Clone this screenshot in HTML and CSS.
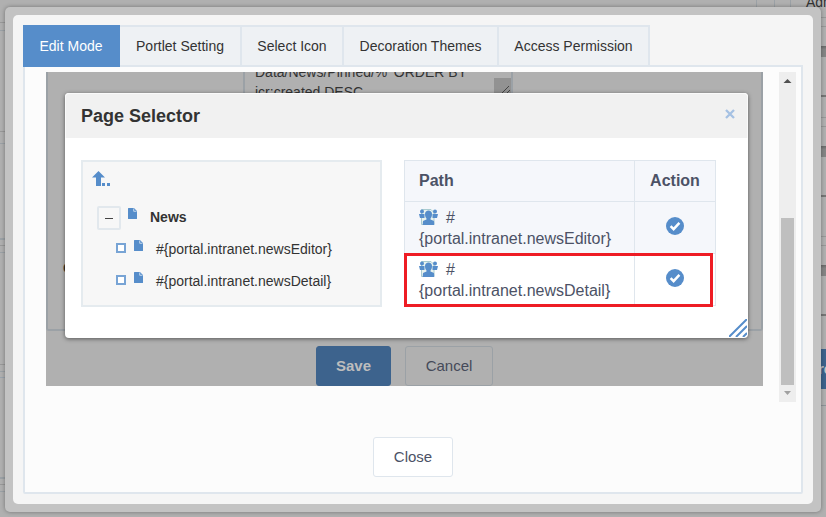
FILE: index.html
```html
<!DOCTYPE html>
<html lang="en">
<head>
<meta charset="utf-8">
<title>Page Selector</title>
<link rel="stylesheet" href="styles.css">
</head>
<body>
<svg class="sprite" aria-hidden="true">
  <symbol id="file" viewBox="0 0 9 11"><path fill="#568dca" d="M.6 0H6l3 3v7.400a.6.6 0 0 1-.6.6H.6a.6.6 0 0 1-.6-.6V.6A.6.6 0 0 1 .6 0z"/><path d="M5.700.5v2.800h2.800" fill="none" stroke="#dce8f5" stroke-width=".8"/></symbol>
  <symbol id="check" viewBox="0 0 18 18"><circle cx="9" cy="9" r="9" fill="#568dca"/><path d="M4.6 9.1l3 3 5.8-6.3" fill="none" stroke="#fff" stroke-width="2.5"/></symbol>
  <symbol id="people" viewBox="0 0 19 16"><path d="M2.500.5H12l3 3v12H2.500z" fill="#e9f3ef" stroke="#a9cbd0"/><g fill="#568dca"><circle cx="3" cy="2.500" r="2"/><path d="M0 5h5.500v4H1z"/><circle cx="16" cy="2.500" r="2"/><path d="M13.500 5H19l-1 4h-4.500z"/><path d="M6 5C6 2.800 7.500 1.500 9.500 1.500S13 2.800 13 5c0 2-.6 3.700-1.500 4.500v1l3 1.200c.6.300.7 1 .7 4.300H3.800c0-3.300.1-4 .7-4.300l3-1.200v-1C6.600 8.700 6 7 6 5z"/></g></symbol>
</svg>
<div class="page">
  <div class="rail">
    <i class="gap first"></i><i class="card c1"></i><i class="gap"></i><i class="card c2"></i><i class="gap g3"></i><i class="card c3"></i><i class="gap g3"></i><i class="card c4"></i><i class="gap g5"></i>
  </div>
  <div class="topline"><i></i><i></i><i></i><span>Adm</span></div>
  <div class="rail right">
    <i class="cell start"></i><b></b><i class="cell"></i><i class="cell low"></i><b></b><i class="cell"></i><i class="cell low tall"></i><b></b><i class="cell"></i><span class="action">re</span><i class="end"></i>
  </div>
</div>

<div class="frame">
  <div class="window">
    <nav class="tabs">
      <a class="tab active">Edit Mode</a><a class="tab t2">Portlet Setting</a><a class="tab t3">Select Icon</a><a class="tab t4">Decoration Themes</a><a class="tab t5">Access Permission</a>
    </nav>
    <section class="panel">
      <div class="content">
        <div class="editor">
          <div class="fieldset">
            <div class="textarea"><div class="query">Data/News/Pinned/%' ORDER BY<br>jcr:created DESC</div><div class="corner"><svg width="17" height="22"><path d="M8 15l7-7M13 15l3-3" stroke="#444" fill="none"/></svg></div></div>
            <strong class="label">Content</strong>
          </div>
          <div class="buttons"><button class="btn save">Save</button><button class="btn cancel">Cancel</button></div>
        </div>
        <div class="scrollbar">
          <svg width="17" height="17"><path d="M4.500 11h8L8.500 7z" fill="#505050"/></svg>
          <i></i>
          <svg width="17" height="17"><path d="M5 6h7L8.500 10z" fill="#a0a0a0"/></svg>
        </div>
      </div>
      <div class="footer"><button class="btn close">Close</button></div>
    </section>
  </div>
</div>

<div class="dialog">
  <header><h1>Page Selector</h1><svg width="10" height="10"><path d="M1 1l8 8M9 1L1 9" stroke="#a5c1e3" stroke-width="2.300"/></svg></header>
  <div class="body">
    <div class="tree">
      <svg class="up" width="20" height="16"><path d="M6.500 0L13 6.500H9V15H4V6.500H0z" fill="#568dca"/><path d="M10 12h3v3h-3zM15 12h3v3h-3z" fill="#568dca"/></svg>
      <div class="node root"><span class="toggle"></span><svg class="file" width="9" height="11"><use href="#file"/></svg><strong>News</strong></div>
      <div class="node"><span class="box"></span><svg class="file" width="9" height="11"><use href="#file"/></svg><span>#{portal.intranet.newsEditor}</span></div>
      <div class="node"><span class="box"></span><svg class="file" width="9" height="11"><use href="#file"/></svg><span>#{portal.intranet.newsDetail}</span></div>
    </div>
    <div class="tablewrap">
      <table>
        <tr><th>Path</th><th class="action-col">Action</th></tr>
        <tr class="odd"><td><svg class="people" width="19" height="16"><use href="#people"/></svg>#<br>{portal.intranet.newsEditor}</td><td class="action-col"><svg width="18" height="18"><use href="#check"/></svg></td></tr>
        <tr><td><svg class="people" width="19" height="16"><use href="#people"/></svg>#<br>{portal.intranet.newsDetail}</td><td class="action-col"><svg width="18" height="18"><use href="#check"/></svg></td></tr>
      </table>
      <div class="highlight"></div>
    </div>
  </div>
  <svg class="grip" width="18" height="18"><path d="M0 18L18 0M7 18L18 7M14 18l4-4" stroke="#568dca" stroke-width="2"/></svg>
</div>
</body>
</html>
```
FILE: styles.css
```css
* { box-sizing: border-box; }
body { margin: 0; width: 826px; height: 517px; overflow: hidden; background: #b0b0b0; font-family: "Liberation Sans", Arial, sans-serif; color: #333; }
svg { display: block; }
button { font: inherit; padding: 0; }
.sprite { position: absolute; width: 0; height: 0; }

.page { display: flex; width: 826px; height: 517px; overflow: hidden; }
.rail { width: 5px; flex: none; display: flex; flex-direction: column; }
.rail i, .rail b { display: block; flex: none; }
.gap { height: 13px; border-top: 1px dashed #999; border-bottom: 1px solid #9ba1a6; margin-top: 2px; }
.gap.first { height: 9px; margin-top: 22px; }
.card { border-bottom: 2px solid #9ba1a6; }
.c1 { height: 98px; border: 0; }
.c2 { height: 96px; }
.g3 { height: 8px; margin-top: 5px; border-bottom-style: dashed; }
.c3 { height: 106px; border: 0; }
.c4 { height: 102px; border-top: 1px solid #9aa4ad; margin-top: 5px; }
.g5 { height: 8px; margin-top: 5px; }
.topline { flex: none; width: 816px; height: 20px; display: flex; padding-left: 751px; }
.topline i { flex: none; width: 18px; border-left: 1px solid #9ba1a6; }
.topline i + i + i { width: 11px; margin-left: -2px; }
.topline span { margin: -6px 0 0 5px; font-size: 14px; line-height: 16px; }
.right { width: 5px; }
.cell { height: 39px; border-bottom: 1px solid #666; }
.cell.start { height: 46px; border-bottom: 0; background: linear-gradient(#999, #999) 0 17px / 5px 1px no-repeat, linear-gradient(#999, #999) 0 26px / 5px 1px no-repeat; }
.right b { height: 11px; background: linear-gradient(#6a6a6a, #858585 30%); }
.right .cell { height: 40px; border-bottom-width: 2px; border-color: #777; }
.right .cell.start { height: 46px; }
.right .cell.low { height: 49px; border-bottom: 0; background: linear-gradient(#999, #999) 0 20px / 5px 1px no-repeat, linear-gradient(#999, #999) 0 29px / 5px 1px no-repeat; }
.right .cell.low.tall { height: 68px; background-position: 0 39px, 0 48px; }
.action { flex: none; width: 5px; height: 40px; margin-top: 33px; overflow: hidden; background: #3d638d; color: #c4c4c4; font: bold 15px/40px "Liberation Sans", sans-serif; text-indent: -3px; }
.end { height: 17px; border-bottom: 1px solid #8e9499; }

.frame { position: absolute; left: 5px; top: 7px; width: 816px; height: 505px; padding: 8px; border-radius: 5px; background: #c3c3c3; box-shadow: 0 0 4px rgba(0,0,0,.35); }
.window { height: 489px; border-radius: 5px; background: #f5f5f5; padding: 10px; }
.tabs { display: flex; height: 42px; position: relative; }
.tab { height: 42px; border: 2px solid #dfe6ed; border-left: 0; background: #eef1f4; font-size: 14px; line-height: 38px; text-align: center; white-space: nowrap; }
.tab.active { width: 97px; padding-left: 1px; background: #568dca; border-color: #568dca; color: #fff; }
.t2 { width: 122px; }
.t3 { width: 102px; }
.t4 { width: 155px; }
.t5 { width: 151px; }
.panel { width: 780px; height: 429px; margin-top: -2px; border: 2px solid #dfe6ed; border-radius: 0 0 2px 2px; background: #fcfcfc; padding: 5px 5px 0 21px; }
.content { display: flex; justify-content: space-between; height: 330px; }
.editor { width: 717px; height: 314px; background: #b0b0b0; overflow: hidden; }
.fieldset { height: 259px; border: 2px solid #9ba1a6; border-top: 0; border-radius: 0 0 3px 3px; }
.textarea { margin-left: 195px; width: 270px; height: 23px; border: 2px solid #9ba1a6; border-width: 0 2px; display: flex; justify-content: space-between; overflow: hidden; }
.query { margin: -10px 0 0 10px; font-size: 14px; line-height: 20px; white-space: nowrap; }
.corner { width: 17px; margin-top: 6px; background: #929292; }
.label { display: block; margin: 163px 0 0 15px; font-size: 15px; line-height: 20px; }
.buttons { display: flex; gap: 14px; margin: 15px 0 0 270px; }
.btn { height: 40px; border: 1px solid #dfe6ed; border-radius: 3px; padding-bottom: 2px; font-size: 15px; color: #4c5266; }
.save { width: 75px; background: #3d638d; border-color: #3d638d; color: #bdbdbd; font-weight: bold; }
.cancel { width: 88px; background: #b0b0b0; border-color: #9ba1a6; color: #454a59; }
.close { width: 80px; background: #fff; }
.footer { padding: 35px 0 0 327px; }
.scrollbar { width: 17px; height: 330px; background: #eee; }
.scrollbar i { display: block; width: 13px; height: 167px; margin: 129px 0 0 2px; background: #bfbfbf; }

.dialog { position: absolute; left: 65px; top: 93px; width: 683px; height: 245px; border-radius: 4px; background: #fff; box-shadow: 0 1px 4px rgba(0,0,0,.5); }
.dialog header { display: flex; justify-content: space-between; height: 45px; padding: 0 13px 0 15px; border: 1px solid #fafafa; border-bottom: 0; border-radius: 4px 4px 0 0; background: #f1f1f1; }
.dialog header svg { margin: 15px -1px 0 0; }
h1 { margin: 0; font-size: 18px; line-height: 44px; }
.body { display: flex; gap: 22px; padding: 22px 0 0 16px; }
.tree { width: 301px; height: 147px; border: 2px solid #e5ebef; background: #f7f7f7; font-size: 14px; }
.up { margin: 9px 0 0 9px; }
.node { display: flex; height: 32px; padding-left: 33px; }
.root { padding: 19px 0 0 14px; height: 52px; }
.toggle { width: 24px; height: 24px; border: 2px solid #e2e8ed; border-radius: 2px; background: linear-gradient(#444, #444) center / 8px 1px no-repeat; }
.root .file { margin: 2px 13px 0 7px; }
.root strong { line-height: 22px; }
.box { width: 10px; height: 10px; margin-top: 4px; border: 2px solid #78a4d5; background: #fff; }
.node .file { flex: none; }
.node:not(.root) .file { margin: 1px 13px 0 8px; }
.node span:last-child { line-height: 20px; }
.tablewrap { position: relative; width: 312px; height: 147px; }
table { width: 312px; border-collapse: collapse; table-layout: fixed; font-size: 16px; line-height: 21px; color: #4c5266; }
th, td { border: 1px solid #dfe6ed; padding: 4px 14px; text-align: left; height: 52px; }
th { height: 41px; padding-bottom: 6px; }
th, .odd { background: #f5f7fb; }
th.action-col, td.action-col { width: 81px; padding: 0; text-align: center; }
th.action-col { padding-bottom: 2px; }
td.action-col svg { margin: -3px auto 0; }
.people { display: inline-block; vertical-align: -2px; margin-right: 8px; }
.highlight { position: absolute; left: 0; top: 93px; width: 309px; height: 54px; border: 3px solid #ee1c24; }
.grip { position: absolute; right: 1px; bottom: 1px; }
```
